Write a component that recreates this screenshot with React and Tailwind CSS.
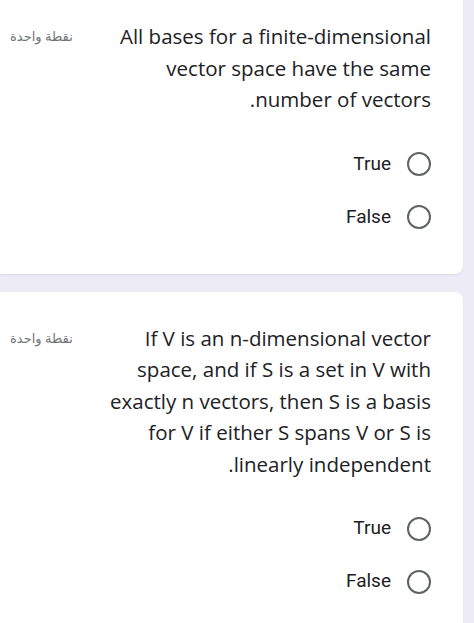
import React from "react";

const questions = [
  {
    lines: ["All bases for a finite-dimensional", "vector space have the same", "number of vectors."],
    first: true,
  },
  {
    lines: [
      "If V is an n-dimensional vector",
      "space, and if S is a set in V with",
      "exactly n vectors, then S is a basis",
      "for V if either S spans V or S is",
      "linearly independent.",
    ],
    first: false,
  },
];

function Radio({ label }) {
  return (
    <div className="flex items-center h-[53px] gap-[16px]">
      <div className="w-[24px] h-[24px] rounded-full border-2 border-[#5f6368] shrink-0" />
      <span className="text-[19px] text-[#202124]" style={{ fontFamily: "Roboto, sans-serif" }}>
        {label}
      </span>
    </div>
  );
}

function Card({ q }) {
  return (
    <div
      className={
        "bg-white rounded-r-lg shadow-[0_1px_2px_rgba(0,0,0,0.08)] pr-[32px] pl-[10px] " +
        (q.first ? "-mt-[10px] pt-[31px] pb-[30px]" : "pt-[31px] pb-[40px]")
      }
    >
      <div className="flex items-start justify-between">
        <div
          className="text-[20.5px] leading-[31.5px] text-[#202124]"
          style={{ fontFamily: "'Open Sans', sans-serif" }}
        >
          {q.lines.map((l, i) => (
            <div key={i}>{l}</div>
          ))}
        </div>
        <div
          className="text-[13px] leading-[31.5px] text-[#70757a]"
          style={{ fontFamily: "'Noto Sans', 'DejaVu Sans', sans-serif" }}
        >
          نقطة واحدة
        </div>
      </div>
      <div className="mt-[22px]">
        <Radio label="True" />
        <Radio label="False" />
      </div>
    </div>
  );
}

export default function App() {
  return (
    <div dir="rtl" className="h-[623px] overflow-hidden bg-[#ecebf6] pr-[11px]">
      <div className="flex flex-col gap-[18px]">
        {questions.map((q, i) => (
          <Card key={i} q={q} />
        ))}
      </div>
    </div>
  );
}
